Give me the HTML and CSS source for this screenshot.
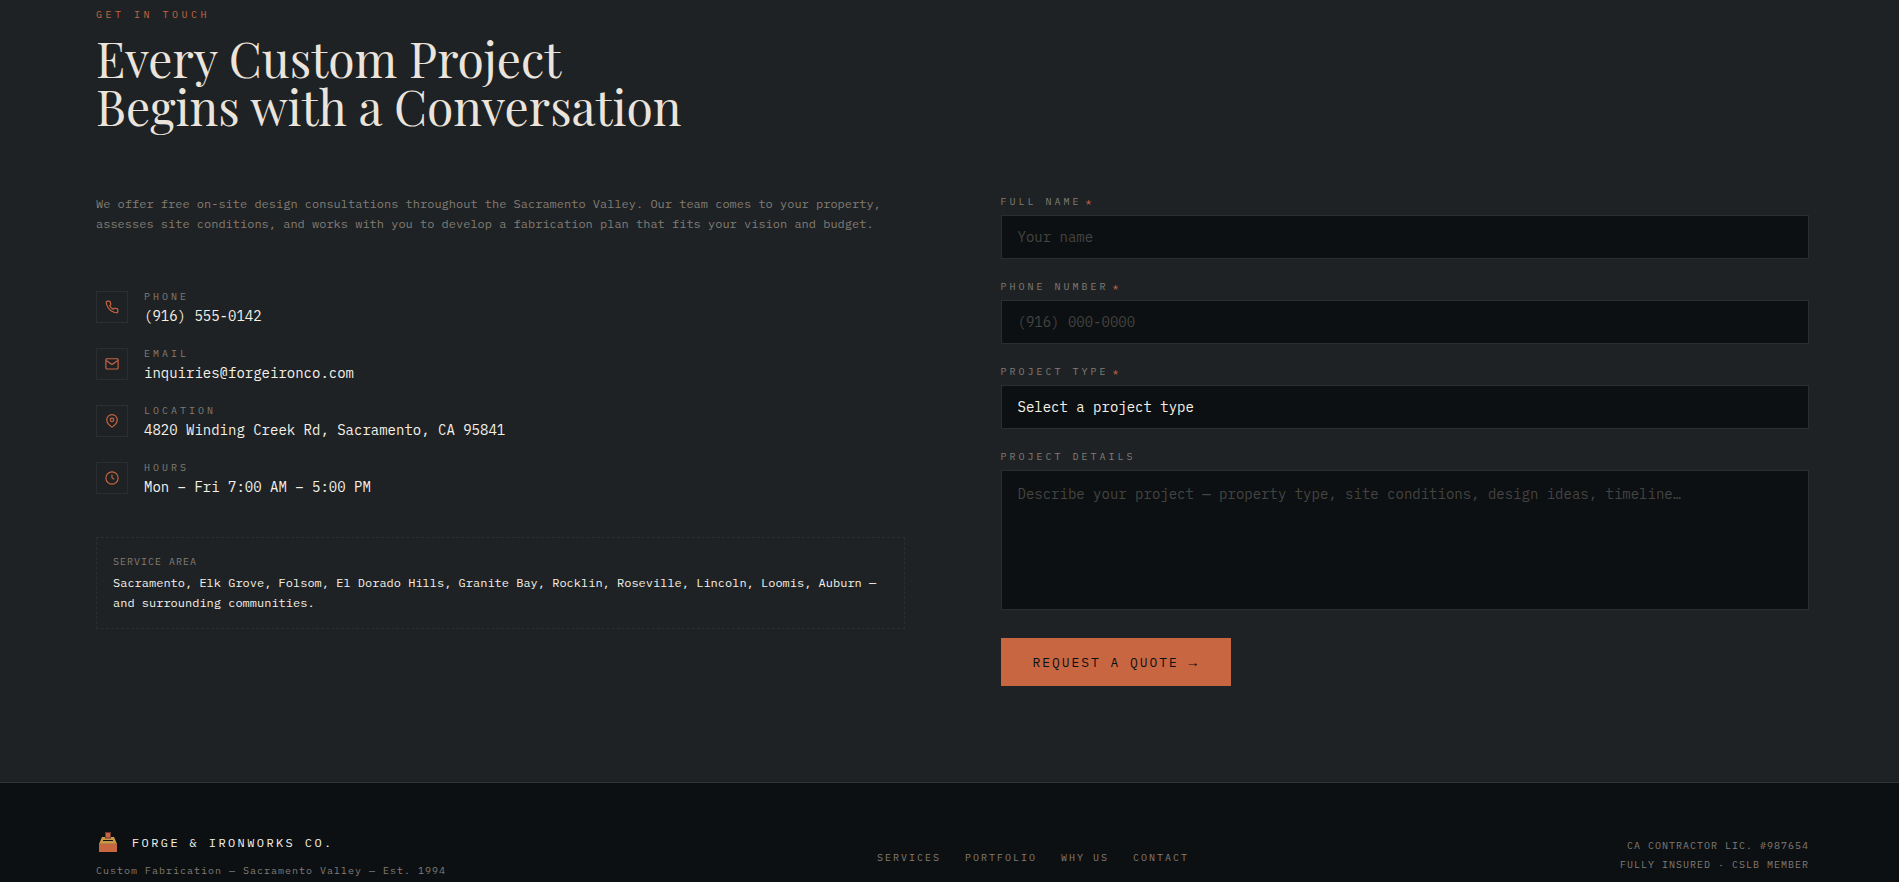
FILE: index.html
```html
<!DOCTYPE html>
<html lang="en">
<head>
  <meta charset="UTF-8" />
  <meta name="viewport" content="width=device-width, initial-scale=1.0" />
  <title>Forge &amp; Ironworks Co. | Contact</title>
  <link rel="stylesheet" href="styles.css">
</head>
<body>
  <section class="contact" id="contact">
    <div class="section-label">Get in Touch</div>
    <h2>Every Custom Project<br>Begins with a Conversation</h2>

    <div class="contact-grid">
      <div class="contact-info">
        <p class="intro">We offer free on-site design consultations throughout the Sacramento Valley. Our team comes to your property, assesses site conditions, and works with you to develop a fabrication plan that fits your vision and budget.</p>

        <div class="contact-list">
          <div class="contact-item">
            <div class="contact-icon">
              <svg width="14" height="14" viewBox="0 0 24 24" fill="none" stroke="currentColor" stroke-width="2"><path d="M22 16.92v3a2 2 0 0 1-2.18 2 19.79 19.79 0 0 1-8.63-3.07 19.5 19.5 0 0 1-6-6 19.79 19.79 0 0 1-3.07-8.67A2 2 0 0 1 4.11 2h3a2 2 0 0 1 2 1.72 12.84 12.84 0 0 0 .7 2.81 2 2 0 0 1-.45 2.11L8.09 9.91a16 16 0 0 0 6 6l1.27-1.27a2 2 0 0 1 2.11-.45 12.84 12.84 0 0 0 2.81.7A2 2 0 0 1 22 16.92z"/></svg>
            </div>
            <div>
              <div class="contact-label">Phone</div>
              <div class="contact-value">(916) 555-0142</div>
            </div>
          </div>
          <div class="contact-item">
            <div class="contact-icon">
              <svg width="14" height="14" viewBox="0 0 24 24" fill="none" stroke="currentColor" stroke-width="2"><rect x="1.5" y="3" width="21" height="17.5" rx="1.5"/><polyline points="22,6 12,13 2,6"/></svg>
            </div>
            <div>
              <div class="contact-label">Email</div>
              <div class="contact-value">inquiries@forgeironco.com</div>
            </div>
          </div>
          <div class="contact-item">
            <div class="contact-icon">
              <svg width="14" height="14" viewBox="0 0 24 24" fill="none" stroke="currentColor" stroke-width="2"><path d="M21 10c0 7-9 12.5-9 12.5S3 17 3 10a9 9 0 0 1 18 0z"/><circle cx="12" cy="10" r="3"/></svg>
            </div>
            <div>
              <div class="contact-label">Location</div>
              <div class="contact-value">4820 Winding Creek Rd, Sacramento, CA 95841</div>
            </div>
          </div>
          <div class="contact-item">
            <div class="contact-icon">
              <svg width="14" height="14" viewBox="0 0 24 24" fill="none" stroke="currentColor" stroke-width="2"><circle cx="12" cy="12" r="10.5"/><polyline points="12 6 12 12 16 14"/></svg>
            </div>
            <div>
              <div class="contact-label">Hours</div>
              <div class="contact-value">Mon – Fri 7:00 AM – 5:00 PM</div>
            </div>
          </div>
        </div>

        <div class="service-area">
          <div class="service-label">Service Area</div>
          <p>Sacramento, Elk Grove, Folsom, El Dorado Hills, Granite Bay, Rocklin, Roseville, Lincoln, Loomis, Auburn — and surrounding communities.</p>
        </div>
      </div>

      <form class="contact-form">
        <div class="form-group">
          <label for="name">Full Name<span class="required">*</span></label>
          <input type="text" id="name" placeholder="Your name">
        </div>
        <div class="form-group">
          <label for="phone">Phone Number<span class="required">*</span></label>
          <input type="tel" id="phone" placeholder="(916) 000-0000">
        </div>
        <div class="form-group">
          <label for="type">Project Type<span class="required">*</span></label>
          <select id="type">
            <option value="">Select a project type</option>
          </select>
        </div>
        <div class="form-group">
          <label for="details">Project Details</label>
          <textarea id="details" placeholder="Describe your project — property type, site conditions, design ideas, timeline…"></textarea>
        </div>
        <button class="btn" type="button">Request a Quote <span class="arrow">→</span></button>
      </form>
    </div>
  </section>

  <footer>
    <div class="footer-brand">
      <div class="brand">
        <svg width="24" height="24" viewBox="0 0 24 24">
          <rect x="3" y="14" width="18" height="8" fill="#c86642"/>
          <path d="M6 7h12l3 7H3z" fill="#c9974a"/>
          <rect x="3" y="13.5" width="18" height="1" fill="#a8703c"/>
          <rect x="7" y="10" width="10" height="1" fill="#0c1012"/>
          <rect x="9.5" y="2.5" width="5" height="5.5" fill="#c86642" stroke="#6b3a2a" stroke-width="1"/>
        </svg>
        <span>Forge &amp; Ironworks Co.</span>
      </div>
      <p class="tagline">Custom Fabrication — Sacramento Valley — Est. 1994</p>
    </div>
    <nav class="footer-nav">
      <a href="#services">Services</a>
      <a href="#portfolio">Portfolio</a>
      <a href="#why">Why Us</a>
      <a href="#contact">Contact</a>
    </nav>
    <div class="footer-legal">CA Contractor Lic. #987654<br>Fully Insured · CSLB Member</div>
  </footer>
</body>
</html>
```

FILE: styles.css
```css
* {
  margin: 0;
  padding: 0;
  box-sizing: border-box;
}

body {
  background: #1e2224;
  color: #f5f0e8;
  font-family: "IBM Plex Mono", "Liberation Mono", monospace;
  font-size: 14px;
  overflow: hidden;
  height: 882px;
}

.contact {
  height: 782px;
  padding: 7px 90px 0 96px;
}

.section-label {
  font-size: 10px;
  line-height: 16px;
  letter-spacing: 0.35em;
  text-transform: uppercase;
  color: #c86642;
}

h2 {
  margin-top: 11px;
  font-family: "Playfair Display", "Liberation Serif", serif;
  font-size: 48px;
  font-weight: 400;
  line-height: 48px;
  color: #ebe4dd;
}

.contact-grid {
  display: grid;
  grid-template-columns: 1fr 1fr;
  gap: 96px;
  margin-top: 68px;
}

.intro {
  margin-top: -4px;
  font-size: 12px;
  line-height: 20px;
  color: #827c75;
}

.contact-list {
  display: flex;
  flex-direction: column;
  gap: 19px;
  margin-top: 55px;
}

.contact-item {
  display: flex;
  gap: 16px;
  height: 38px;
}

.contact-icon {
  display: flex;
  align-items: center;
  justify-content: center;
  width: 32px;
  height: 32px;
  margin-top: 2px;
  border: 1px solid #2a2e30;
  color: #c86642;
}

.contact-label {
  font-size: 10px;
  line-height: 16px;
  letter-spacing: 0.3em;
  text-transform: uppercase;
  color: #827c75;
}

.contact-value {
  font-size: 14px;
  line-height: 22px;
}

.service-area {
  height: 92px;
  margin-top: 39px;
  padding: 16px;
  border: 1px dashed #2a2e30;
  font-size: 12px;
  line-height: 20px;
}

.service-label {
  font-size: 10px;
  line-height: 16px;
  letter-spacing: 0.1em;
  margin-bottom: 3px;
  text-transform: uppercase;
  color: #827c75;
}

.form-group {
  margin-bottom: 24px;
}

label {
  display: block;
  margin-bottom: 10px;
  font-size: 10px;
  line-height: 7px;
  letter-spacing: 0.3em;
  text-transform: uppercase;
  color: #827c75;
}

.required {
  margin-left: 4px;
  color: #c86642;
}

input, select, textarea {
  display: block;
  width: 100%;
  height: 44px;
  padding: 0 16px;
  border: 1px solid #2a2e30;
  border-radius: 0;
  background: #0c1012;
  color: #f5f0e8;
  font-family: inherit;
  font-size: 14px;
  appearance: none;
  outline: none;
}

textarea {
  height: 140px;
  padding: 12px 16px;
  line-height: 22px;
  resize: none;
}

::placeholder {
  color: #454441;
}

.btn {
  display: block;
  height: 48px;
  margin-top: 28px;
  padding: 0 32px;
  border: none;
  background: #c86642;
  color: #0c1012;
  font-family: inherit;
  font-size: 13px;
  letter-spacing: 0.15em;
  text-transform: uppercase;
  cursor: pointer;
}

.arrow {
  font-family: "Liberation Mono", monospace;
  font-size: 14px;
}

footer {
  display: flex;
  justify-content: space-between;
  height: 100px;
  padding: 0 90px 0 96px;
  border-top: 1px solid #303436;
  background: #0c1012;
}

.footer-brand {
  padding-top: 44px;
}

.brand {
  display: flex;
  align-items: center;
  gap: 12px;
  height: 30px;
  font-size: 12px;
  letter-spacing: 0.2em;
  text-transform: uppercase;
}

.tagline {
  margin-top: 6px;
  font-size: 10px;
  line-height: 16px;
  letter-spacing: 0.1em;
  color: #827c75;
}

.footer-nav {
  display: flex;
  gap: 24px;
  padding-top: 67px;
}

.footer-nav a {
  font-size: 10px;
  line-height: 16px;
  letter-spacing: 0.2em;
  text-transform: uppercase;
  text-decoration: none;
  color: #827c75;
}

.footer-legal {
  padding-top: 53px;
  font-size: 10px;
  line-height: 19px;
  letter-spacing: 0.1em;
  text-align: right;
  text-transform: uppercase;
  color: #827c75;
}
```
